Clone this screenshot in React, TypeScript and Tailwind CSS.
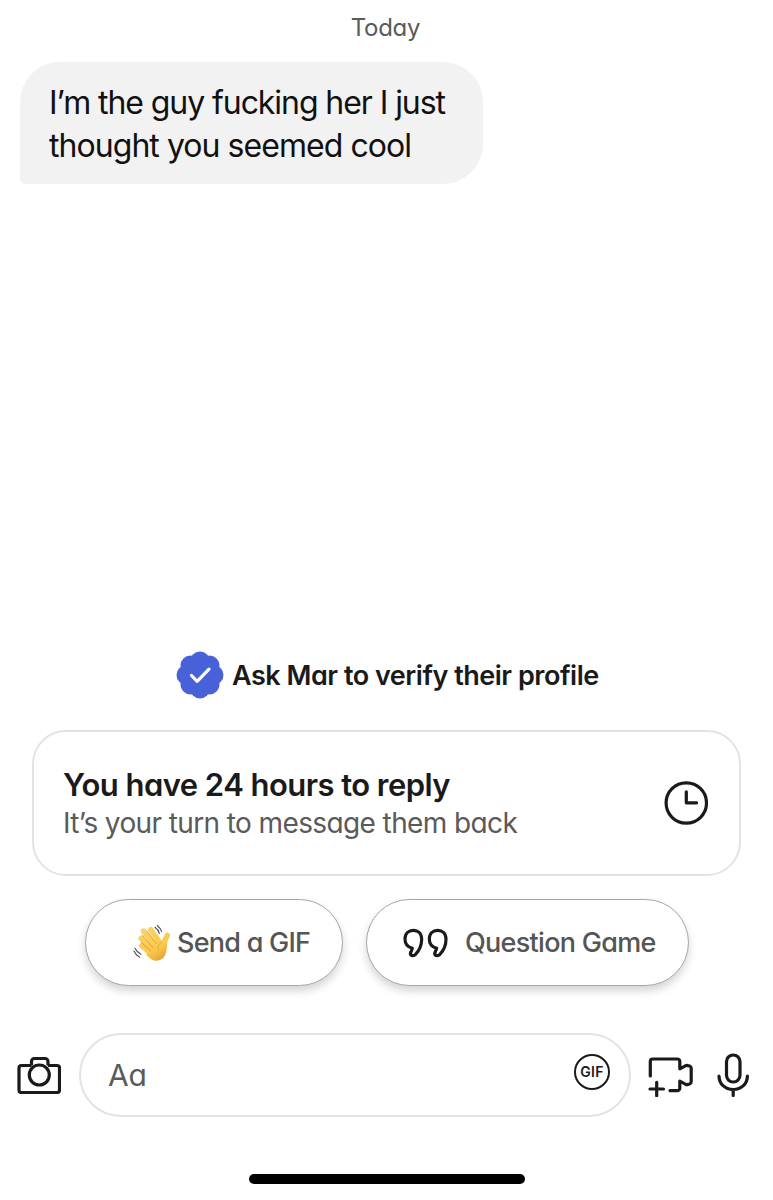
import type { ReactNode } from 'react';

interface PillProps {
    className: string;
    children: ReactNode;
}

const BADGE_LOBES = [0, 45, 90, 135, 180, 225, 270, 315];

function VerifiedBadge() {
    return (
        <svg className="h-12 w-12 shrink-0" viewBox="0 0 48 48" fill="none">
            <g fill="#4961d8">
                <circle cx="24" cy="24" r="20.5" />
                {BADGE_LOBES.map((angle) => (
                    <circle key={angle} cx="24" cy="10.5" r="10" transform={`rotate(${angle} 24 24)`} />
                ))}
            </g>
            <path d="M15.5 24.500l5.700 5.800L33 18.200" stroke="#fff" strokeWidth="3.2" strokeLinecap="round" strokeLinejoin="round" />
        </svg>
    );
}

function ClockIcon() {
    return (
        <svg className="h-11 w-11 shrink-0" viewBox="0 0 44 44" fill="none" stroke="#1a1a1a" strokeWidth="3.2" strokeLinecap="round" strokeLinejoin="round">
            <circle cx="22.300" cy="22" r="20.200" />
            <path d="M22.300 10.800v11h10.300" />
        </svg>
    );
}

function WaveIcon() {
    return (
        <svg className="h-[38px] w-[38px] shrink-0" viewBox="0 0 114 114" fill="none" strokeLinecap="round" strokeLinejoin="round">
            <defs>
                <linearGradient id="skin" x1="25" y1="15" x2="85" y2="112" gradientUnits="userSpaceOnUse">
                    <stop offset="0" stopColor="#fdd365" />
                    <stop offset="0.65" stopColor="#fac84c" />
                    <stop offset="1" stopColor="#e3a033" />
                </linearGradient>
            </defs>
            <g stroke="url(#skin)" strokeWidth="16">
                <path d="M53 17l27 38" />
                <path d="M31 21l36 45" />
                <path d="M24 43l34 35" />
                <path d="M26 65l26 21" />
                <path d="M103 34c-6 8-9 17-9 32" />
            </g>
            <path
                d="M78 48c4 5 7 7 10 4l13 5c1 12 1 24-5 37-5 12-16 17-29 16-10-1-19-8-27-17l2-20z"
                fill="url(#skin)"
            />
            <path d="M42 22l28 36M28 34l32 37M26 56l27 25" stroke="#d6932f" strokeWidth="2.6" />
            <path d="M86 54c-8 5-12 13-11 23" stroke="#e2a437" strokeWidth="2.600" />
            <path d="M66 10c7 5 11 10 13 18M73 5c7 5 11 11 13 18M3 81c4 9 9 15 17 19M6 73c4 9 10 14 18 18" stroke="#505156" strokeWidth="3.400" />
        </svg>
    );
}

function QuoteIcon() {
    return (
        <svg className="h-[30px] w-[46px] shrink-0" viewBox="0 0 138 90" fill="none" stroke="#1a1a1a" strokeWidth="9.5" strokeLinecap="round" strokeLinejoin="round">
            <path id="quote-mark" d="M30 83Q22 83 22 76L28 61C13 57 6 46 6 33C6 16 17 7 31 7C45 7 56 17 56 34C56 54 47 70 37 80Q34 83 30 83Z" />
            <use href="#quote-mark" x="73" />
        </svg>
    );
}

function CameraIcon() {
    return (
        <svg className="h-[38px] w-11 shrink-0" viewBox="0 0 44 38" fill="none" stroke="#1a1a1a" strokeWidth="3.2" strokeLinejoin="round">
            <path d="M14.500 9.500V5.500a3 3 0 0 1 3-3h10.500a3 3 0 0 1 3 3v4" />
            <path d="M14.500 9.500H4.500a2.500 2.500 0 0 0-2.500 2.500v22a2.500 2.500 0 0 0 2.500 2.500h35.500a2.500 2.500 0 0 0 2.500-2.500V12a2.500 2.500 0 0 0-2.500-2.500h-9" />
            <circle cx="22.300" cy="19" r="10" />
        </svg>
    );
}

function GifIcon() {
    return (
        <span className="mb-1.5 flex h-9 w-9 shrink-0 items-center justify-center rounded-full border-[2.5px] border-[#1a1a1a] text-[14px] font-semibold leading-none tracking-[0.3px] text-[#1a1a1a]">
            GIF
        </span>
    );
}

function VideoPlusIcon() {
    return (
        <svg className="mt-[3px] h-10 w-[45px] shrink-0" viewBox="0 0 45 40" fill="none" stroke="#1a1a1a" strokeWidth="3.2" strokeLinecap="round" strokeLinejoin="round">
            <path d="M2.300 19V4.500A2.500 2.500 0 0 1 4.800 2h24.500a2.500 2.500 0 0 1 2.500 2.500v7.300l5.600-3q1.200-.6 2.500-.2l1.600.4q1.700.6 1.700 2.300v13.400q0 1.700-1.700 2.300l-1.600.4q-1.300.4-2.500-.2l-5.600-3v7a2.500 2.500 0 0 1-2.500 2.500H22" />
            <path d="M2 32h13.500M8.700 25.300v13.500" />
        </svg>
    );
}

function MicIcon() {
    return (
        <svg className="h-11 w-8 shrink-0" viewBox="0 0 32 44" fill="none" stroke="#1a1a1a" strokeWidth="3.2" strokeLinecap="round">
            <rect x="9.500" y="2" width="13.500" height="27" rx="6.750" />
            <path d="M2 23c0 7.800 6 13.500 14.200 13.500s14.200-5.700 14.200-13.500M16.200 37v5.500" />
        </svg>
    );
}

function Pill({ className, children }: PillProps) {
    return (
        <button
            className={`flex h-[87px] items-center rounded-full border border-[#a6a6a6] bg-white text-[27px] font-medium text-[#555] shadow-[0_5px_9px_rgba(0,0,0,0.17)] ${className}`}
        >
            {children}
        </button>
    );
}

export default function App() {
    return (
        <main className="flex h-[1200px] w-[773px] flex-col overflow-hidden bg-white font-['Inter','Liberation_Sans',sans-serif] whitespace-nowrap text-[#1a1a1a] [font-feature-settings:'cv11']">
            <div className="flex h-[62px] justify-center pt-[10px] pr-0.5 text-[24px] leading-9 tracking-[-0.3px] text-[#5a5a5a]">
                <span>Today</span>
            </div>

            <div className="ml-5 h-[122px] w-[463px] rounded-[40px] rounded-bl-[6px] bg-[#f2f2f2] px-[29px] pt-[19px] text-[32px] leading-[43px] text-[#111]">
                <p className="tracking-[-1.07px]">I’m the guy fucking her I just</p>
                <p className="tracking-[-0.95px]">thought you seemed cool</p>
            </div>

            <div className="mt-auto flex items-center pl-44">
                <VerifiedBadge />
                <span className="mt-0.5 ml-2 text-[27px] leading-9 font-semibold tracking-[-0.48px]">Ask Mar to verify their profile</span>
            </div>

            <section className="mx-8 mt-[31px] flex h-[146px] items-center justify-between rounded-[34px] border-2 border-[#e3e3e3] pr-[31px] pl-[29px]">
                <div>
                    <h2 className="text-[31px] leading-[39px] font-semibold tracking-[-0.55px]">You have 24 hours to reply</h2>
                    <p className="text-[28px] leading-[38px] tracking-[-0.61px] text-[#5a5a5a]">It’s your turn to message them back</p>
                </div>
                <ClockIcon />
            </section>

            <div className="mt-[23px] flex gap-[23px] pl-[85px]">
                <Pill className="w-[258px] pl-[47px]">
                    <WaveIcon />
                    <span className="mt-0.5 ml-1.5 tracking-[-0.75px]">Send a GIF</span>
                </Pill>
                <Pill className="w-[323px] pl-9">
                    <QuoteIcon />
                    <span className="mt-0.5 ml-4 tracking-[-0.7px]">Question Game</span>
                </Pill>
            </div>

            <div className="mt-[47px] flex items-center pl-[17px]">
                <CameraIcon />
                <div className="ml-[18px] flex h-[84px] w-[552px] items-center justify-between rounded-full border-2 border-[#e3e3e3] pr-[19px] pl-[27px]">
                    <span className="text-[30px] tracking-[-0.3px] text-[#5a5a5a]">Aa</span>
                    <GifIcon />
                </div>
                <div className="ml-[17px] flex items-center gap-6">
                    <VideoPlusIcon />
                    <MicIcon />
                </div>
            </div>

            <div className="mx-auto mt-[57px] mb-4 h-[10px] w-[276px] shrink-0 rounded-full bg-black" />
        </main>
    );
}
